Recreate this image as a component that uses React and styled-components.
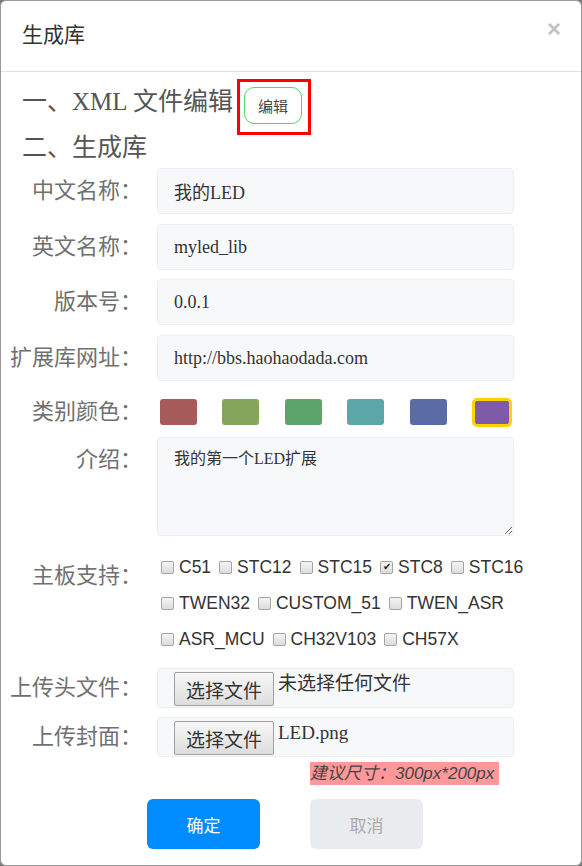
import React from 'react'
import styled, { createGlobalStyle } from 'styled-components'

const GlobalStyle = createGlobalStyle`
  html, body {
    margin: 0;
    padding: 0;
    background: #7a7a7a;
  }
  * { box-sizing: border-box; }
`

const serif = `"Liberation Serif", "Noto Sans CJK SC", serif`
const sans = `"Liberation Sans", "Noto Sans CJK SC", sans-serif`

const Modal = styled.div`
  width: 582px;
  height: 866px;
  background: #fff;
  border: 1px solid #9a9a9a;
  border-radius: 6px;
  overflow: hidden;
  font-family: ${serif};
`

const Header = styled.div`
  height: 71px;
  display: flex;
  align-items: center;
  justify-content: space-between;
  padding: 0 18px 6px 21px;
  border-bottom: 1px solid #e3e3e3;
`

const Title = styled.h4`
  margin: 0;
  font-size: 21px;
  font-weight: 400;
  color: #333;
`

const Close = styled.span`
  font-family: ${sans};
  font-size: 24px;
  font-weight: 700;
  color: #c2c2c2;
  line-height: 1;
  margin-top: -8px;
  margin-right: 2px;
`

const Body = styled.div`
  padding-top: 7px;
`

const Heading = styled.div`
  display: flex;
  align-items: flex-start;
  height: ${p => p.h}px;
  margin-top: ${p => p.mt || 0}px;
  padding-left: 21px;
  font-size: 25px;
  line-height: ${p => p.lh}px;
  color: #555;
  gap: 4px;
`

const Mark = styled.span`
  display: inline-flex;
  padding: 5px 6px 8px 4px;
  border: 3px solid #f00;
`

const EditButton = styled.button`
  width: 58px;
  height: 37px;
  border: 1px solid #4cd964;
  border-radius: 10px;
  background: #fff;
  font-family: ${sans};
  font-size: 15px;
  color: #444;
  padding: 0;
`

const Row = styled.div`
  display: flex;
  align-items: ${p => p.align || 'center'};
  margin-top: ${p => p.mt || 0}px;
  min-height: ${p => p.h || 0}px;
`

const Label = styled.label`
  width: 141px;
  flex: none;
  text-align: right;
  white-space: nowrap;
  font-size: 22px;
  line-height: 30px;
  color: #707070;
  padding-top: ${p => p.pt || 0}px;
  margin-right: 15px;
`

const Input = styled.input`
  width: 357px;
  height: 46px;
  padding: 0 16px;
  border: 1px solid #eceef1;
  border-radius: 4px;
  background: #f7f8fa;
  font-family: ${serif};
  font-size: 18px;
  color: #333;
  outline: none;
`

const TextArea = styled.textarea`
  width: 357px;
  height: 99px;
  padding: 7px 16px;
  border: 1px solid #eceef1;
  border-radius: 4px;
  background: #f7f8fa;
  font-family: ${serif};
  font-size: 16px;
  color: #333;
  outline: none;
`

const Swatches = styled.div`
  display: flex;
  justify-content: space-between;
  width: 355px;
  padding-left: 3px;
`

const Swatch = styled.span`
  width: ${p => (p.active ? 40 : 37)}px;
  height: ${p => (p.active ? 29 : 26)}px;
  margin: ${p => (p.active ? '-1.5px 0' : 0)};
  border-radius: ${p => (p.active ? 5 : 3)}px;
  background: ${p => p.color};
  border: ${p => (p.active ? '3px solid #ffd200' : 'none')};
`

const Boards = styled.div`
  width: 400px;
  display: flex;
  flex-wrap: wrap;
  column-gap: 8px;
  padding-left: 4px;
`

const Board = styled.span`
  display: inline-flex;
  align-items: center;
  gap: 5px;
  height: 36px;
  font-family: ${sans};
  font-size: 17.5px;
  color: #333;
`

const Box = styled.span`
  width: 13px;
  height: 13px;
  border: 1px solid #a4a4a4;
  border-radius: 2px;
  background: linear-gradient(#f4f4f4, #dcdcdc);
  display: inline-flex;
  align-items: center;
  justify-content: center;
  font-size: 10px;
  line-height: 1;
  color: #222;
`

const Break = styled.span`
  flex-basis: 100%;
  height: 0;
`

const FileBox = styled.div`
  width: 357px;
  height: 40px;
  padding: 3px 16px 0;
  border: 1px solid #eceef1;
  border-radius: 4px;
  background: #f7f8fa;
  display: flex;
  align-items: flex-start;
  gap: 4px;
`

const FileButton = styled.span`
  width: 100px;
  height: 34px;
  border: 1px solid #a0a0a0;
  border-radius: 2px;
  background: linear-gradient(#f7f7f7, #dddddd);
  font-size: 19px;
  color: #333;
  display: flex;
  align-items: center;
  justify-content: center;
`

const FileName = styled.span`
  font-size: 19px;
  line-height: 24px;
  color: #333;
`

const Hint = styled.div`
  margin: 5px 0 0 309px;
  width: 189px;
  height: 23px;
  background: #ff9898;
  font-family: ${sans};
  font-style: italic;
  font-size: 17px;
  line-height: 23px;
  color: #444;
  white-space: nowrap;
`

const Actions = styled.div`
  display: flex;
  gap: 50px;
  margin: 14px 0 0 146px;
`

const Button = styled.button`
  width: 113px;
  height: 50px;
  border: none;
  border-radius: 6px;
  font-family: ${sans};
  font-size: 17px;
  background: ${p => (p.primary ? '#008cff' : '#e9ecef')};
  color: ${p => (p.primary ? '#fff' : '#aaa')};
`

const colors = ['#a65b5b', '#84a55b', '#5ba56c', '#5ba6a6', '#5a6ba5', '#7f5aa6']
const boards = [
  ['C51', 'STC12', 'STC15', 'STC8', 'STC16'],
  ['TWEN32', 'CUSTOM_51', 'TWEN_ASR'],
  ['ASR_MCU', 'CH32V103', 'CH57X'],
]

export default function App() {
  return (
    <>
      <GlobalStyle />
      <Modal>
        <Header>
          <Title>生成库</Title>
          <Close>×</Close>
        </Header>
        <Body>
          <Heading h={56} lh={46}>
            一、XML 文件编辑
            <Mark><EditButton>编辑</EditButton></Mark>
          </Heading>
          <Heading h={30} lh={30} mt={-2}>二、生成库</Heading>

          <Row mt={5}>
            <Label>中文名称：</Label>
            <Input readOnly value="我的LED" />
          </Row>
          <Row mt={10}>
            <Label>英文名称：</Label>
            <Input readOnly value="myled_lib" />
          </Row>
          <Row mt={9}>
            <Label>版本号：</Label>
            <Input readOnly value="0.0.1" />
          </Row>
          <Row mt={10}>
            <Label>扩展库网址：</Label>
            <Input readOnly value="http://bbs.haohaodada.com" />
          </Row>
          <Row mt={8} h={46}>
            <Label>类别颜色：</Label>
            <Swatches>
              {colors.map((c, i) => (
                <Swatch key={c} color={c} active={i === colors.length - 1} />
              ))}
            </Swatches>
          </Row>
          <Row mt={2} align="flex-start">
            <Label pt={8}>介绍：</Label>
            <TextArea readOnly value="我的第一个LED扩展" />
          </Row>
          <Row mt={13} align="flex-start">
            <Label pt={12}>主板支持：</Label>
            <Boards>
              {boards.map(line => (
                <React.Fragment key={line[0]}>
                  {line.map(b => (
                    <Board key={b}>
                      <Box>{b === 'STC8' ? '✔' : ''}</Box>
                      {b}
                    </Board>
                  ))}
                  <Break />
                </React.Fragment>
              ))}
            </Boards>
          </Row>
          <Row mt={11}>
            <Label>上传头文件：</Label>
            <FileBox>
              <FileButton>选择文件</FileButton>
              <FileName>未选择任何文件</FileName>
            </FileBox>
          </Row>
          <Row mt={9}>
            <Label>上传封面：</Label>
            <FileBox>
              <FileButton>选择文件</FileButton>
              <FileName>LED.png</FileName>
            </FileBox>
          </Row>
          <Hint>建议尺寸：300px*200px</Hint>
          <Actions>
            <Button primary>确定</Button>
            <Button>取消</Button>
          </Actions>
        </Body>
      </Modal>
    </>
  )
}
